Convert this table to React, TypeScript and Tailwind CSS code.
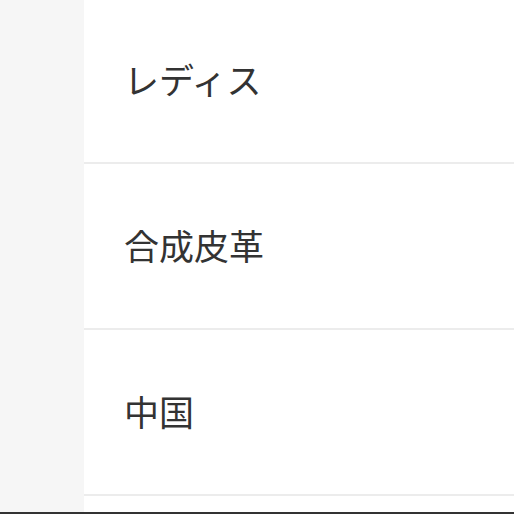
import React from "react";

const rows = ["レディス", "合成皮革", "中国"];

export default function App() {
  return (
    <div
      className="w-[514px] h-[514px] overflow-hidden flex flex-col bg-[#f6f6f6]"
      style={{ fontFamily: '"Noto Sans CJK JP", "Noto Sans", sans-serif' }}
    >
      <div className="flex flex-1 min-h-0">
        <div className="w-[84px] shrink-0 bg-[#f6f6f6]" />
        <div className="flex-1 bg-white flex flex-col">
          <div className="-mt-[2px] flex flex-col">
            {rows.map((r) => (
              <div
                key={r}
                className="h-[166px] shrink-0 border-b-2 border-[#ececec] flex items-center pl-[40px] pb-[4px] text-[35px] leading-none text-[#333333]"
              >
                {r}
              </div>
            ))}
          </div>
          <div className="flex-1" />
        </div>
      </div>
      <div className="h-[2px] bg-[#333333]" />
    </div>
  );
}
